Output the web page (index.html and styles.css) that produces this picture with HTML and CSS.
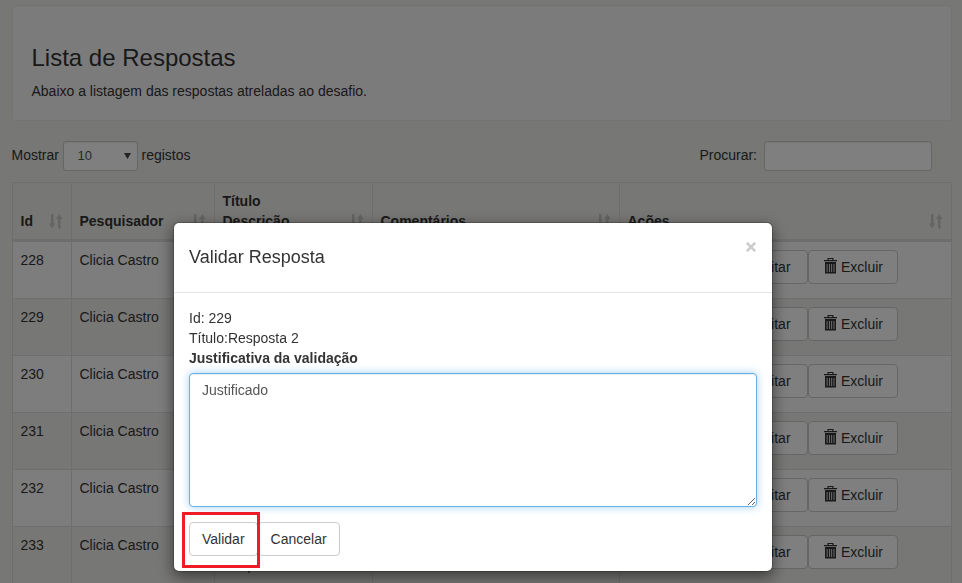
FILE: index.html
```html
<!DOCTYPE html>
<html lang="pt">
<head>
<meta charset="utf-8">
<title>Lista de Respostas</title>
<link rel="stylesheet" href="styles.css">
</head>
<body>
<svg class="sprite" aria-hidden="true">
  <symbol id="sort" viewBox="0 0 14 16"><path d="M2 1h2.500v9.500H6.200L3.200 15.500 0 10.500h2zM9 15.500V6H7l3.500-5L13.700 6h-2.200v9.500z"/></symbol>
  <symbol id="trash" viewBox="0 0 14 16"><path d="M3.500 2V0h6v2H13v1.300H0V2zM4.700 1v1h3.600V1zM1 4h11v11.500H1zM2.700 6v8h.8V6zm2.300 0v8h.8V6zm2.300 0v8h.8V6zm2.300 0v8h.8V6z" fill-rule="evenodd"/></symbol>
</svg>
<main class="page">
  <header class="panel">
    <h1>Lista de Respostas</h1>
    <p>Abaixo a listagem das respostas atreladas ao desafio.</p>
  </header>
  <div class="toolbar">
    <label class="length"><span class="caption">Mostrar</span><span class="select"><span>10</span><svg width="7" height="6" viewBox="0 0 7 6"><path d="M0 0h7L3.500 6z"/></svg></span><span class="caption">registos</span></label>
    <label class="search"><span class="caption">Procurar:</span><input type="text"></label>
  </div>
  <div class="table">
    <div class="row head">
      <div>Id<svg class="sort"><use href="#sort"/></svg></div>
      <div>Pesquisador<svg class="sort"><use href="#sort"/></svg></div>
      <div>Título<br>Descrição<svg class="sort"><use href="#sort"/></svg></div>
      <div>Comentários<svg class="sort"><use href="#sort"/></svg></div>
      <div>Ações<svg class="sort"><use href="#sort"/></svg></div>
    </div>
    <div class="row"><div>228</div><div>Clicia Castro</div><div></div><div></div><div class="actions"><span class="btn edit">Editar</span><span class="btn del"><svg><use href="#trash"/></svg>Excluir</span></div></div>
    <div class="row"><div>229</div><div>Clicia Castro</div><div></div><div></div><div class="actions"><span class="btn edit">Editar</span><span class="btn del"><svg><use href="#trash"/></svg>Excluir</span></div></div>
    <div class="row"><div>230</div><div>Clicia Castro</div><div></div><div></div><div class="actions"><span class="btn edit">Editar</span><span class="btn del"><svg><use href="#trash"/></svg>Excluir</span></div></div>
    <div class="row"><div>231</div><div>Clicia Castro</div><div></div><div></div><div class="actions"><span class="btn edit">Editar</span><span class="btn del"><svg><use href="#trash"/></svg>Excluir</span></div></div>
    <div class="row"><div>232</div><div>Clicia Castro</div><div></div><div></div><div class="actions"><span class="btn edit">Editar</span><span class="btn del"><svg><use href="#trash"/></svg>Excluir</span></div></div>
    <div class="row"><div>233</div><div>Clicia Castro</div><div><br>Resposta 6</div><div></div><div class="actions"><span class="btn edit">Editar</span><span class="btn del"><svg><use href="#trash"/></svg>Excluir</span></div></div>
  </div>
</main>
<div class="backdrop">
  <section class="modal">
    <div class="modal-head">
      <h2>Validar Resposta</h2>
      <svg class="close" width="10" height="10" viewBox="0 0 10 10"><path d="M.8.8l8.400 8.400M9.200.8L.8 9.200"/></svg>
    </div>
    <div class="modal-body">
      <div>Id: 229</div>
      <div>Título:Resposta 2</div>
      <label for="reason">Justificativa da validação</label>
      <textarea id="reason">Justificado</textarea>
      <div class="buttons">
        <span class="btn">Validar</span><span class="btn">Cancelar</span>
        <span class="highlight"></span>
      </div>
    </div>
  </section>
</div>
</body>
</html>
```
FILE: styles.css
```css
* { box-sizing: border-box; }
body {
  margin: 0;
  height: 583px;
  overflow: hidden;
  background: #efeeea;
  color: #333;
  font: 14px/20px "Liberation Sans", Arial, sans-serif;
}
h1, h2, p { margin: 0; font-weight: 400; }
.sprite { display: none; }
.page { height: 583px; overflow: hidden; padding: 5px 10px 0 12px; }
.panel {
  height: 116px;
  padding: 38px 18.500px 0;
  border: 1px solid #e7e7e7;
  border-radius: 4px;
  background: #f7f7f7;
}
.panel h1 { font-size: 24px; line-height: 28px; margin-bottom: 9px; }
.toolbar {
  display: flex;
  justify-content: space-between;
  height: 61px;
  padding: 20px 20px 0 0;
}
.length, .search { display: flex; align-items: center; height: 30px; }
.length .caption:first-child { width: 51px; margin-left: -.5px; }
.caption { padding-bottom: 2px; }
.select, .search input {
  height: 30px;
  border: 1px solid #ccc;
  border-radius: 3px;
  background: #fff;
  box-shadow: inset 0 1px 1px rgba(0,0,0,.075);
}
.select {
  display: flex;
  flex: none;
  align-items: center;
  justify-content: space-between;
  width: 75px;
  margin-right: 4px;
  padding: 0 6px 0 14px;
  color: #555;
  font-size: 13px;
}
.select svg { fill: #444; }
.search input { width: 168px; margin-left: 7px; }
.table { width: 940px; border: 1px solid #ddd; border-bottom: 0; }
.row {
  display: grid;
  grid-template-columns: 58px 143px 158px 247px 1fr;
  height: 57px;
  border-top: 1px solid #ddd;
}
.row > div { padding: 8px 8px 8px 7.500px; border-left: 1px solid #ddd; }
.row > div:first-child { border-left: 0; }
.row:nth-child(even) { background: #fafafa; }
.row:nth-child(2) { height: 56px; border-top: 0; }
.row.head {
  height: 59px;
  border-top: 0;
  border-bottom: 3px solid #ddd;
  font-weight: 700;
}
.head > div {
  position: relative;
  display: flex;
  align-items: flex-end;
}
.sort {
  position: absolute;
  right: 8px;
  bottom: 10px;
  width: 14px;
  height: 16px;
  fill: #c9c9c6;
}
.row > .actions { display: flex; padding-left: 102px; }
.btn {
  display: inline-flex;
  align-items: center;
  height: 34px;
  padding: 0 12px;
  border: 1px solid #ccc;
  border-radius: 4px;
  background: #fff;
}
.row .edit { width: 86px; padding-left: 31px; }
.row .del { width: 90px; padding: 0 0 0 15px; }
.del svg { width: 14px; height: 16px; margin: -3px 3px 0 0; fill: #333; }
.backdrop {
  position: fixed;
  inset: 0;
  padding: 222px 0 0 173px;
  background: rgba(0,0,0,.5);
}
.modal {
  width: 600px;
  height: 350px;
  border: 1px solid rgba(0,0,0,.2);
  border-radius: 6px;
  background: #fff;
  background-clip: padding-box;
  box-shadow: 0 5px 15px rgba(0,0,0,.5);
}
.modal-head {
  display: flex;
  justify-content: space-between;
  height: 70px;
  padding: 19px 16px 0 15px;
  border-bottom: 1px solid #e5e5e5;
}
.modal-head h2 { font-size: 18px; line-height: 30px; }
.close { fill: none; stroke: #ccc; stroke-width: 2.600; }
.modal-body { padding: 15px; }
.modal-body label { display: block; margin-bottom: 5px; font-weight: 700; }
textarea {
  display: block;
  width: 568px;
  height: 134px;
  padding: 6px 12px;
  border: 1px solid #66afe9;
  border-radius: 4px;
  outline: 0;
  color: #555;
  font: inherit;
  box-shadow: inset 0 1px 1px rgba(0,0,0,.075), 0 0 8px rgba(102,175,233,.6);
}
.buttons { position: relative; display: flex; margin-top: 15px; }
.highlight {
  position: absolute;
  left: -7px;
  top: -10px;
  width: 78px;
  height: 56px;
  border: 3px solid #ee1c25;
}
```
